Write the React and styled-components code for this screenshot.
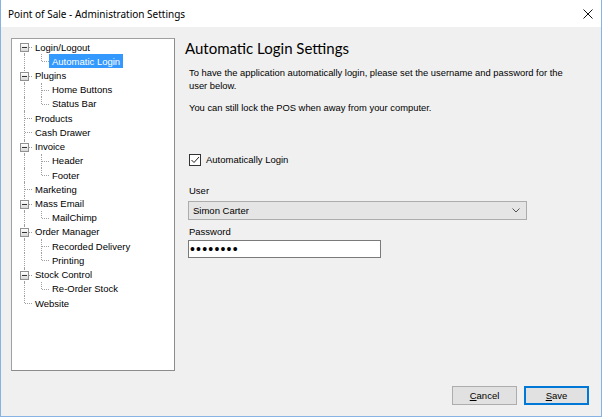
import React from "react";
import styled, { createGlobalStyle } from "styled-components";

const GlobalStyle = createGlobalStyle`
  html, body {
    margin: 0;
    padding: 0;
    background: #ffffff;
  }
  * {
    box-sizing: border-box;
  }
`;

const uiFont = `"Liberation Sans", Arial, sans-serif`;

const Window = styled.div`
  width: 602px;
  height: 417px;
  display: flex;
  flex-direction: column;
  background: #f0f0f0;
  border: 1px solid #86b3e4;
  border-top: none;
  font-family: ${uiFont};
  font-size: 9.5px;
  color: #000;
`;

const TitleBar = styled.div`
  height: 27px;
  flex: none;
  display: flex;
  align-items: center;
  justify-content: space-between;
  padding: 0 8px 0 7px;
  background: #ffffff;
`;

const Title = styled.span`
  font-family: "Noto Sans", "Open Sans", sans-serif;
  font-size: 10px;
  color: #000;
`;

const CloseButton = styled.span`
  display: flex;
  width: 10px;
  height: 10px;
  margin-top: 1px;
`;

const Body = styled.div`
  display: flex;
  gap: 10px;
  padding: 11px 10px 0 10px;
`;

const TreeBox = styled.div`
  width: 164px;
  height: 333px;
  flex: none;
  background: #ffffff;
  border: 1px solid #a0a0a0;
  border-right-color: #8c8c8c;
  border-bottom-color: #8c8c8c;
  padding: 1px 0 0 3px;
`;

const Row = styled.div`
  display: flex;
  height: 14.22px;
  align-items: stretch;
`;

const Cell = styled.span`
  position: relative;
  width: 17px;
  flex: none;

  &::before {
    content: "";
    display: ${(p) => (p.$v === "none" ? "none" : "block")};
    position: absolute;
    left: 9px;
    top: ${(p) => (p.$v === "bottom" ? "50%" : "0")};
    bottom: ${(p) => (p.$v === "top" ? "50%" : "0")};
    border-left: 1px dotted #a0a0a0;
  }

  &::after {
    content: "";
    display: ${(p) => (p.$h ? "block" : "none")};
    position: absolute;
    left: 10px;
    right: 0;
    top: 50%;
    border-top: 1px dotted #a0a0a0;
  }
`;

const Expander = styled.span`
  position: absolute;
  z-index: 1;
  left: 5px;
  top: calc(50% - 4px);
  width: 9px;
  height: 9px;
  border: 1px solid #919191;
  background: linear-gradient(#ffffff, #d8d8d8);

  &::after {
    content: "";
    position: absolute;
    left: 1px;
    right: 1px;
    top: 3px;
    height: 1px;
    background: #333;
  }
`;

const Label = styled.span`
  display: flex;
  align-items: center;
  padding: 0 3px 0 3px;
  white-space: nowrap;
  background: ${(p) => (p.$selected ? "#3399ff" : "transparent")};
  color: ${(p) => (p.$selected ? "#ffffff" : "#000")};
`;

const Panel = styled.div`
  flex: 1;
  display: flex;
  flex-direction: column;
`;

const Heading = styled.h1`
  margin: 0;
  height: 20px;
  line-height: 20px;
  font-family: Lato, "Open Sans", sans-serif;
  font-weight: 400;
  font-size: 15px;
  color: #000;
`;

const Content = styled.div`
  display: flex;
  flex-direction: column;
  padding-left: 3px;
`;

const Paragraph = styled.p`
  margin: ${(p) => p.$top}px 0 0 1px;
  width: 392px;
  line-height: 13px;
  font-size: 9.4px;
`;

const CheckRow = styled.label`
  display: flex;
  align-items: center;
  gap: 5px;
  height: 13px;
  margin: 39px 0 0 1px;
`;

const CheckBox = styled.span`
  display: flex;
  width: 12px;
  height: 12px;
  border: 1px solid #333;
  background: #fff;
`;

const FieldLabel = styled.div`
  margin: ${(p) => p.$top}px 0 0 1px;
  line-height: 13px;
`;

const Combo = styled.div`
  margin-top: 4px;
  width: 339px;
  height: 19px;
  display: flex;
  align-items: center;
  justify-content: space-between;
  padding: 0 6px 0 4px;
  background: #e5e5e5;
  border: 1px solid #acacac;
`;

const PasswordInput = styled.input`
  margin-top: 2px;
  width: 193px;
  height: 18px;
  padding: 0 1px;
  border: 1px solid #7a7a7a;
  background: #fff;
  font-family: ${uiFont};
  font-size: 14px;
  letter-spacing: 1.2px;
  outline: none;
`;

const Footer = styled.div`
  margin-top: auto;
  display: flex;
  justify-content: flex-end;
  gap: 7px;
  padding: 0 12px 11px 0;
`;

const Button = styled.button`
  width: 65px;
  height: 19px;
  padding: 0;
  font-family: ${uiFont};
  font-size: 9.5px;
  color: #000;
  background: #e1e1e1;
  border: 1px solid ${(p) => (p.$default ? "#0078d7" : "#adadad")};
  box-shadow: ${(p) => (p.$default ? "inset 0 0 0 1px #0078d7" : "none")};
`;

const tree = [
  { label: "Login/Logout", children: ["Automatic Login"] },
  { label: "Plugins", children: ["Home Buttons", "Status Bar"] },
  { label: "Products" },
  { label: "Cash Drawer" },
  { label: "Invoice", children: ["Header", "Footer"] },
  { label: "Marketing" },
  { label: "Mass Email", children: ["MailChimp"] },
  { label: "Order Manager", children: ["Recorded Delivery", "Printing"] },
  { label: "Stock Control", children: ["Re-Order Stock"] },
  { label: "Website" },
];

const selected = "Automatic Login";

const TreeView = () => {
  const rows = [];
  tree.forEach((node, i) => {
    const first = i === 0;
    const last = i === tree.length - 1;
    rows.push(
      <Row key={node.label}>
        <Cell $v={first ? "bottom" : last ? "top" : "full"} $h>
          {node.children && <Expander />}
        </Cell>
        <Label $selected={node.label === selected}>{node.label}</Label>
      </Row>
    );
    (node.children || []).forEach((child, j) => {
      const lastChild = j === node.children.length - 1;
      rows.push(
        <Row key={child}>
          <Cell $v={last ? "none" : "full"} />
          <Cell $v={lastChild ? "top" : "full"} $h />
          <Label $selected={child === selected}>{child}</Label>
        </Row>
      );
    });
  });
  return <TreeBox>{rows}</TreeBox>;
};

const App = () => {
  return (
    <>
      <GlobalStyle />
      <Window>
        <TitleBar>
          <Title>Point of Sale - Administration Settings</Title>
          <CloseButton>
            <svg width="10" height="10" viewBox="0 0 10 10">
              <path d="M0.5 0.5 L9.5 9.5 M9.5 0.5 L0.5 9.5" stroke="#111" strokeWidth="1" />
            </svg>
          </CloseButton>
        </TitleBar>
        <Body>
          <TreeView />
          <Panel>
            <Heading>Automatic Login Settings</Heading>
            <Content>
              <Paragraph $top={8}>
                To have the application automatically login, please set the
                username and password for the user below.
              </Paragraph>
              <Paragraph $top={9}>
                You can still lock the POS when away from your computer.
              </Paragraph>
              <CheckRow>
                <CheckBox>
                  <svg width="10" height="10" viewBox="0 0 10 10">
                    <path d="M1.5 5 L4 7.5 L9 2" fill="none" stroke="#222" strokeWidth="1" />
                  </svg>
                </CheckBox>
                Automatically Login
              </CheckRow>
              <FieldLabel $top={18}>User</FieldLabel>
              <Combo>
                <span>Simon Carter</span>
                <svg width="8" height="5" viewBox="0 0 8 5">
                  <path d="M0.5 0.5 L4 4 L7.5 0.5" fill="none" stroke="#555" strokeWidth="1" />
                </svg>
              </Combo>
              <FieldLabel $top={5}>Password</FieldLabel>
              <PasswordInput type="password" readOnly defaultValue="password" />
            </Content>
          </Panel>
        </Body>
        <Footer>
          <Button>
            <u>C</u>ancel
          </Button>
          <Button $default>
            <u>S</u>ave
          </Button>
        </Footer>
      </Window>
    </>
  );
};

export default App;
